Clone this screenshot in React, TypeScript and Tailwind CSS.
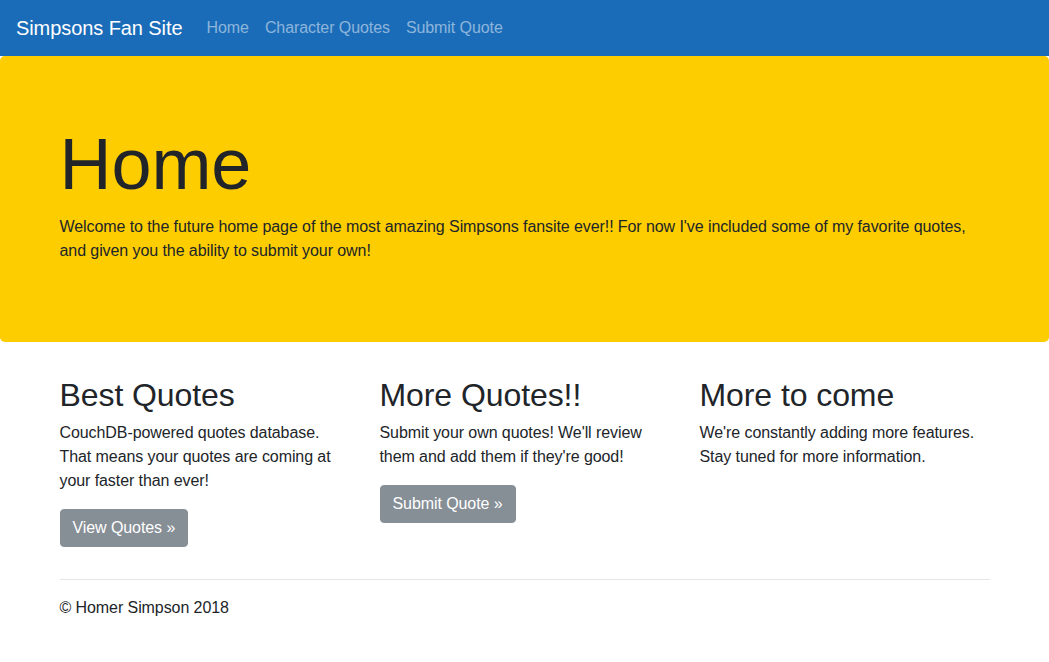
import React from "react";

const cols = [
  {
    title: "Best Quotes",
    text: "CouchDB-powered quotes database. That means your quotes are coming at your faster than ever!",
    button: "View Quotes »",
  },
  {
    title: "More Quotes!!",
    text: "Submit your own quotes! We'll review them and add them if they're good!",
    button: "Submit Quote »",
  },
  {
    title: "More to come",
    text: "We're constantly adding more features. Stay tuned for more information.",
  },
];

const App: React.FC = () => {
  return (
    <div className="min-h-screen bg-white text-[16px] leading-[1.5] tracking-[-0.08px] text-[#212529] font-['Liberation_Sans',Arial,sans-serif]">
      {/* Navbar */}
      <nav className="flex items-center h-[56px] px-4 py-2 bg-[#1a6cb8]">
        <a href="#" className="text-[20px] leading-[30px] py-[5px] mr-4 text-white">
          Simpsons Fan Site
        </a>
        <ul className="flex">
          {["Home", "Character Quotes", "Submit Quote"].map((l) => (
            <li key={l}>
              <a href="#" className="block px-2 py-2 text-white/50">
                {l}
              </a>
            </li>
          ))}
        </ul>
      </nav>

      {/* Jumbotron */}
      <div className="bg-[#fdcd00] rounded-[4.8px] py-16 px-8 mb-8">
        <div className="max-w-[960px] mx-auto px-[15px]">
          <h1 className="text-[72px] leading-[1.2] font-light pt-px mb-2">Home</h1>
          <p className="mb-[15px]">
            Welcome to the future home page of the most amazing Simpsons fansite ever!! For now I've included some of my
            favorite quotes, and given you the ability to submit your own!
          </p>
        </div>
      </div>

      <div className="max-w-[960px] mx-auto px-[15px]">
        <div className="grid grid-cols-3 -mx-[15px]">
          {cols.map((c) => (
            <div key={c.title} className="px-[15px]">
              <h2 className="text-[32px] leading-[1.2] font-normal pt-0.5 mb-1.5">{c.title}</h2>
              <p className="mb-4">{c.text}</p>
              {c.button && (
                <p className="mb-4">
                  <a
                    href="#"
                    className="inline-block align-middle px-3 py-[6px] border border-[#868e96] bg-[#868e96] text-white rounded-[4px] leading-[1.5]"
                  >
                    {c.button}
                  </a>
                </p>
              )}
            </div>
          ))}
        </div>

        <hr className="my-4 border-0 border-t border-black/10" />

        <footer>
          <p className="mb-4">© Homer Simpson 2018</p>
        </footer>
      </div>
    </div>
  );
};

export default App;
